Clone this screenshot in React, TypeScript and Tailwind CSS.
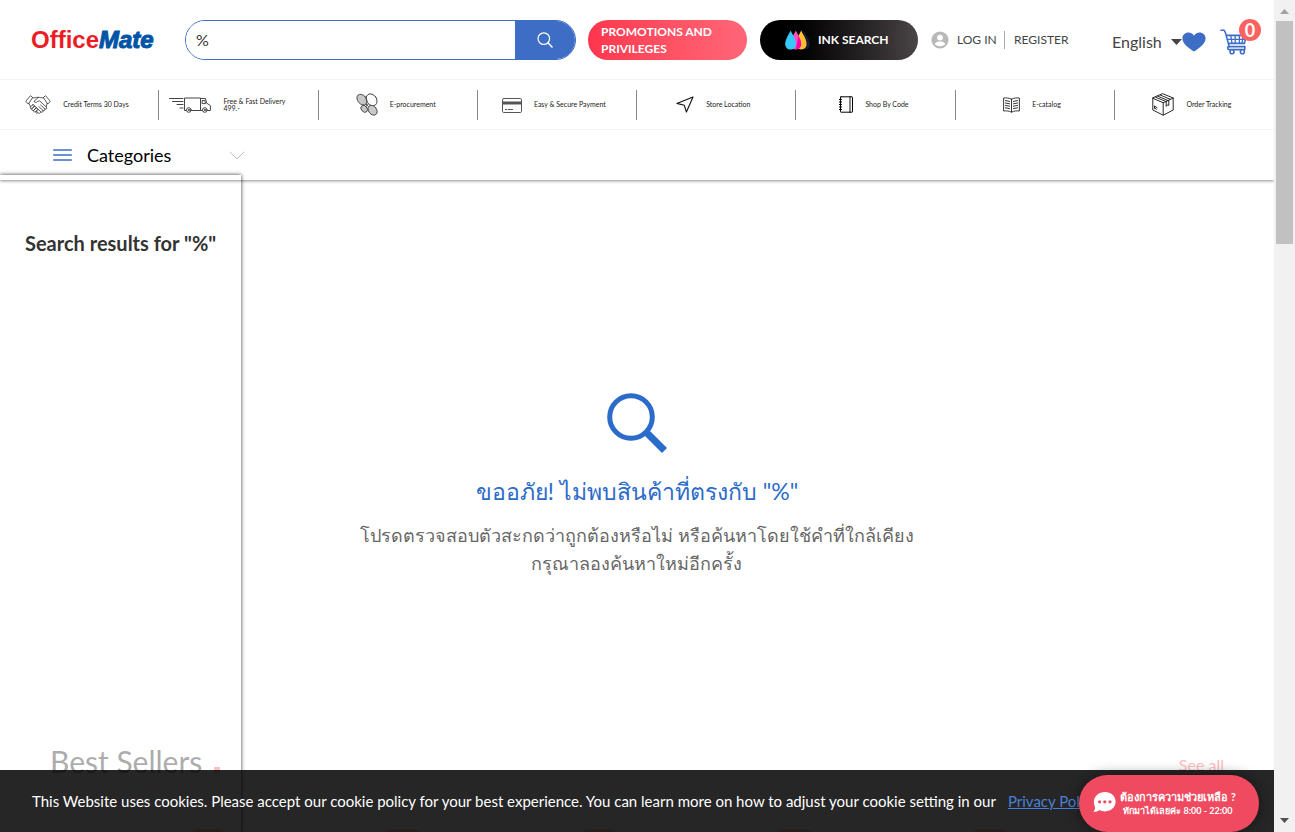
import React from "react";

const outline = { fill: "none", stroke: "currentColor", strokeLinecap: "round", strokeLinejoin: "round" } as const;

function HandshakeIcon() {
  return (
    <svg viewBox="0 0 26 20" className="h-5 w-[26px] shrink-0 text-[#333]" {...outline} strokeWidth="0.8" aria-hidden="true">
      <path d="M5.2 1 L0.8 6.2 L2.6 8.6 L3.8 8.4 L7.4 2.8 Z" />
      <path d="M20.8 1 L25.2 6.2 L23.4 8.6 L22.2 8.4 L18.6 2.8 Z" />
      <path d="M7.4 2.8 C9.5 3.2 10.8 2.2 13 2.4 C15 2.2 16.6 3.2 18.6 2.8" />
      <path d="M13.4 2.5 L9.2 6 C9 7.8 11.2 7.8 12.4 6.6 L14.6 5.8 L21.4 12.2 C22.4 13.4 21 14.8 19.8 13.8 L15.6 10" />
      <path d="M19.8 13.8 C20.6 15.2 19.2 16.4 18 15.4 L13.8 11.6 M18 15.4 C18.6 16.8 17 18 15.8 16.8 L12.4 13.6 M15.8 16.8 C15.8 18.4 14.2 18.8 13.2 17.8 L11.6 16.4" />
      <path d="M3.8 8.4 L5.6 11.8 M22.2 8.4 L21.2 11.6" />
      <path d="M7.6 9.8 L5.4 12.2 C4.8 13.6 6.2 14.4 7 13.6 L9.2 11.2 C9.4 9.8 8.4 9.2 7.6 9.8 Z" />
      <path d="M9.2 11.4 L6.8 14 C6.6 15.6 8 16 8.8 15.2 L11 12.8 C11.2 11.4 10 10.8 9.2 11.4 Z" />
      <path d="M11 13 L8.8 15.4 C8.4 17 10 17.4 10.6 16.8 L12.4 14.8 C12.6 13.2 11.6 12.6 11 13 Z" />
      <path d="M12.4 15 L10.8 16.8 C10.6 18.2 12 18.8 12.6 18" />
    </svg>
  );
}

function TruckIcon() {
  return (
    <svg viewBox="0 0 42 16" className="h-4 w-[42px] shrink-0 text-[#444]" {...outline} strokeWidth="1" aria-hidden="true">
      <path d="M17 13.5 H15.5 V1 H31.5 V13.5 H22" />
      <path d="M31.5 1.5 H36.5 L37.5 6 L41.4 8.6 V13.5 H38.5 M33 13.5 H31.5 M33.5 3.5 H35.8 L36.6 6.6 H33.5 Z" />
      <circle cx="19.8" cy="13" r="2.3" />
      <circle cx="19.8" cy="13" r="0.6" />
      <circle cx="35.8" cy="13" r="2.3" />
      <circle cx="35.8" cy="13" r="0.6" />
      <path d="M0.5 1.5 H14 M3.5 4.5 H14 M8 7.5 H14 M11 11 H14" />
    </svg>
  );
}

function ProcurementIcon() {
  return (
    <svg viewBox="0 0 22 23" className="h-[23px] w-[22px] shrink-0 text-[#444]" {...outline} strokeWidth="0.9" aria-hidden="true">
      <ellipse cx="6" cy="6.6" rx="4.3" ry="6" transform="rotate(-40 6 6.6)" fill="#c8c8c8" />
      <ellipse cx="15.6" cy="6.8" rx="5" ry="6.4" transform="rotate(-35 15.6 6.8)" />
      <ellipse cx="8.2" cy="15.8" rx="2.9" ry="3.8" transform="rotate(-40 8.2 15.8)" fill="#c8c8c8" />
      <ellipse cx="16.6" cy="17.2" rx="4" ry="5.4" transform="rotate(-38 16.6 17.2)" fill="#c8c8c8" />
      <path d="M10 11 L12 13 M10.2 13 L12.4 11" />
    </svg>
  );
}

function CardIcon() {
  return (
    <svg viewBox="0 0 20 16" className="h-4 w-5 shrink-0 text-[#555]" {...outline} strokeWidth="1" aria-hidden="true">
      <rect x="0.5" y="1.5" width="19" height="14" rx="1.2" />
      <path d="M1 6 H19" strokeWidth="3" strokeLinecap="butt" />
      <path d="M3.5 12.5 H5 M6.5 12.5 H10.5" />
    </svg>
  );
}

function LocationIcon() {
  return (
    <svg viewBox="0 0 18 17" className="h-[17px] w-[18px] shrink-0 text-[#111]" {...outline} strokeWidth="1.1" aria-hidden="true">
      <path d="M17 1 L0.9 7.4 L8.3 9.3 L10.4 16 Z" />
    </svg>
  );
}

function NotebookIcon() {
  return (
    <svg viewBox="0 0 14 17" className="h-[17px] w-[14px] shrink-0 text-black" {...outline} strokeWidth="1" aria-hidden="true">
      <path d="M11 1 V16" stroke="#888" strokeWidth="2" />
      <rect x="1.5" y="0.8" width="12" height="15.4" rx="0.5" />
      <path d="M0.4 3.5 H2.5 M0.4 6 H2.5 M0.4 8.5 H2.5 M0.4 11 H2.5 M0.4 13.5 H2.5" />
    </svg>
  );
}

function CatalogIcon() {
  return (
    <svg viewBox="0 0 17 16" className="h-4 w-[17px] shrink-0 text-[#222]" {...outline} strokeWidth="0.9" aria-hidden="true">
      <path d="M8.5 2.2 C6 0.8 3 0.7 0.6 1 V14 C3 13.7 6 13.8 8.5 15.2 C11 13.8 14 13.7 16.4 14 V1 C14 0.7 11 0.8 8.5 2.2 Z M8.5 2.2 V15" />
      <path d="M2.4 3.6 L6.6 4.4 M2.4 6 L6.6 6.8 M2.4 8.4 L6.6 9.2 M2.4 10.8 L6.6 11.6 M14.6 3.6 L10.4 4.4 M14.6 6 L10.4 6.8 M14.6 8.4 L10.4 9.2 M14.6 10.8 L10.4 11.6" />
    </svg>
  );
}

function BoxIcon() {
  return (
    <svg viewBox="0 0 22 23" className="h-[23px] w-[22px] shrink-0 text-[#111]" {...outline} strokeWidth="0.9" aria-hidden="true">
      <path d="M11 0.8 L21.2 5 V17 L11.2 22.2 L0.8 17 V5.2 Z M0.8 5.2 L11.2 9.8 L21.2 5 M11.2 9.8 V22" />
      <path d="M3.6 4.2 L14 8.6 M5.8 3.2 L16.2 7.6 M8.2 2 L18.4 6.4 M14.2 8.6 V13.4 L15.6 11.8 L16.8 12.4 V7.6" />
      <path d="M2.6 13.2 L5 14.6 M2.6 15.2 L4.4 16.2 M2.6 13.2 V15.2" />
    </svg>
  );
}

function InkDropsIcon() {
  return (
    <svg viewBox="0 0 25 20" className="h-5 w-[25px] shrink-0" aria-hidden="true">
      <path d="M18.5 0.5 C20.5 4.5 25 10 25 14 C25 17.4 22.6 19.6 19 19.6 Z" fill="#171a33" />
      <path d="M16.2 0.4 C18.4 5 21.6 9.4 21.6 14 C21.6 17.2 19.4 19.4 16.2 19.4 C13 19.4 10.8 17.2 10.8 14 C10.8 9.4 14 5 16.2 0.4 Z" fill="#fdc02f" />
      <path d="M10.8 0.4 C13 5 16.2 9.4 16.2 14 C16.2 17.2 14 19.4 10.8 19.4 C7.6 19.4 5.4 17.2 5.4 14 C5.4 9.4 8.6 5 10.8 0.4 Z" fill="#ff4fc0" />
      <path d="M13.4 6 C15 8.6 16.2 11.2 16.2 14 C16.2 17.2 14 19.4 10.8 19.4 Z" fill="#ff00a8" />
      <path d="M5.6 0.4 C7.8 5 11 9.4 11 14 C11 17.2 8.8 19.6 5.6 19.6 C2.4 19.6 0.2 17.2 0.2 14 C0.2 9.4 3.4 5 5.6 0.4 Z" fill="#35c8f8" />
    </svg>
  );
}

function CartIcon() {
  return (
    <svg viewBox="0 0 28 26" className="h-[26px] w-7 text-[#3d6dc5]" {...outline} strokeWidth="1.6" aria-hidden="true">
      <path d="M1 1.3 H4.2 L5.4 3.6 L9.2 17.6 H24.6 M6.4 6.4 H26.4 L24.4 14.4 H8.4" />
      <path d="M10.8 6.6 L12 14.2 M15.2 6.6 V14.2 M19.4 6.6 V14.2 M23.2 6.6 L22 14.2 M7.4 10.4 H25.2" strokeWidth="1.3" />
      <path d="M9.2 17.6 C7 17.6 7 20.6 9.2 20.6 H24.8 V17.6" />
      <circle cx="12" cy="22.8" r="2" fill="white" />
      <circle cx="22.4" cy="22.8" r="2" fill="white" />
    </svg>
  );
}

const services = [
  { label: "Credit Terms 30 Days", icon: <HandshakeIcon />, width: "min-w-[70px]" },
  { label: "Free & Fast Delivery\n499.-", icon: <TruckIcon />, width: "min-w-[84px]" },
  { label: "E-procurement", icon: <ProcurementIcon />, width: "min-w-[50px]" },
  { label: "Easy & Secure Payment", icon: <CardIcon />, width: "min-w-[78px]" },
  { label: "Store Location", icon: <LocationIcon />, width: "min-w-[50px]" },
  { label: "Shop By Code", icon: <NotebookIcon />, width: "min-w-[46px]" },
  { label: "E-catalog", icon: <CatalogIcon />, width: "min-w-[34px]" },
  { label: "Order Tracking", icon: <BoxIcon />, width: "min-w-[50px]" },
];

function TopBar() {
  return (
    <div className="flex h-20 items-center border-b border-[#f4f4f4] pl-[31px] pr-[13px]">
      <a href="#" aria-label="OfficeMate" className="w-[154px] shrink-0 font-['Liberation_Sans',sans-serif] text-[24px] font-bold leading-none">
        <span className="text-[#ed1c24]">Office</span>
        <span className="italic text-[#0054a6] [-webkit-text-stroke:1px_#0054a6]">Mate</span>
      </a>
      <form className="flex h-10 min-w-0 flex-1 overflow-hidden rounded-full border border-[#3d6dc5]" onSubmit={(e) => e.preventDefault()}>
        <input aria-label="Search products" defaultValue="%" className="min-w-0 flex-1 bg-white pl-[10px] text-[16px] text-[#333] outline-none" />
        <button type="submit" aria-label="Search" className="grid w-[60px] place-items-center bg-[#3d6dc5] text-white">
          <svg viewBox="0 0 16 16" className="size-4" {...outline} strokeWidth="1.2" aria-hidden="true">
            <circle cx="6.8" cy="6.6" r="5.8" />
            <path d="M11 10.8 L15 15" strokeWidth="1.6" />
          </svg>
        </button>
      </form>
      <a href="#" className="ml-3 flex h-10 w-[159px] shrink-0 items-center whitespace-nowrap rounded-full bg-linear-to-r from-[#ff354d] to-[#ff6678] pl-[13px] text-[12px] font-bold leading-[17px] text-white">
        <span>
          PROMOTIONS AND
          <br />
          PRIVILEGES
        </span>
      </a>
      <a href="#" className="ml-[13px] flex h-10 w-[158px] shrink-0 items-center gap-2 rounded-full bg-linear-to-r from-black to-[#4a4546] pl-[25px] text-[12px] font-bold text-white">
        <InkDropsIcon />
        INK SEARCH
      </a>
      <div className="ml-[13px] flex shrink-0 items-center text-[12px] text-[#444]">
        <svg viewBox="0 0 18 18" className="size-[18px]" aria-hidden="true">
          <circle cx="9" cy="9" r="8.6" fill="#b9b9b9" />
          <circle cx="9" cy="6.6" r="2.9" fill="white" />
          <path d="M3.8 13.2 C4.6 10.6 6.6 10.4 9 10.4 C11.4 10.4 13.4 10.6 14.2 13.2 C12 15.8 6 15.8 3.8 13.2 Z" fill="white" />
        </svg>
        <a href="#" className="ml-2 w-[48px] whitespace-nowrap border-r border-[#aaa] leading-[18px]">LOG IN</a>
        <a href="#" className="ml-[9px] w-[56px]">REGISTER</a>
      </div>
      <div className="ml-[42px] mt-1 flex shrink-0 items-center text-[#444]">
        <select aria-label="Language" className="w-[59px] appearance-none bg-transparent text-[16px] outline-none">
          <option>English</option>
          <option>ไทย</option>
        </select>
        <svg viewBox="0 0 11 6" className="h-[6px] w-[11px]" fill="#444" aria-hidden="true">
          <path d="M0 0 H11 L5.5 6 Z" />
        </svg>
      </div>
      <a href="#" aria-label="Wishlist" className="shrink-0">
        <svg viewBox="0 0 24 20" className="mt-1 h-5 w-6" fill="#3d6dc5" aria-hidden="true">
          <path d="M12 19.6 C9 17 0.4 12.4 0.4 6.4 C0.4 2.8 3.2 0.4 6.4 0.4 C9 0.4 11 1.8 12 3.8 C13 1.8 15 0.4 17.6 0.4 C20.8 0.4 23.6 2.8 23.6 6.4 C23.6 12.4 15 17 12 19.6 Z" />
        </svg>
      </a>
      <a href="#" aria-label="Cart, 0 items" className="relative ml-[14px] mt-1 w-[41px] shrink-0">
        <CartIcon />
        <span className="absolute -top-[10px] right-0 grid size-[22px] place-items-center rounded-full bg-[#ff6161] text-[18px] font-bold leading-none text-white">0</span>
      </a>
    </div>
  );
}

export default function App() {
  return (
    <div className="flex h-screen overflow-hidden bg-white font-[Lato,'Noto_Sans',sans-serif]">
      <div className="relative flex min-w-0 flex-1 flex-col overflow-hidden">
        <header className="shrink-0 shadow-[0_1px_3px_rgba(0,0,0,0.45)]">
          <TopBar />
          <nav aria-label="Services" className="grid h-[50px] grid-cols-8 items-center border-b border-[#f4f4f4]">
            {services.map((s) => (
              <a key={s.label} href="#" className="flex h-[30px] items-center justify-center gap-3 border-r border-[#888] text-[7px] leading-[7px] text-[#222] last:border-r-0">
                {s.icon}
                <span className={`whitespace-pre ${s.width}`}>{s.label}</span>
              </a>
            ))}
          </nav>
          <button type="button" className="flex h-[50px] w-[245px] items-center pl-[53px] text-[18px] text-black">
            <svg viewBox="0 0 19 12" className="h-3 w-[19px]" {...outline} stroke="#3d6dc5" strokeWidth="1.4" aria-hidden="true">
              <path d="M0.7 1 H18.3 M0.7 6 H18.3 M0.7 11 H18.3" />
            </svg>
            <span className="ml-[15px]">Categories</span>
            <svg viewBox="0 0 16 9" className="ml-auto h-[9px] w-4" {...outline} stroke="#bbb" strokeWidth="0.9" aria-hidden="true">
              <path d="M1 1 L8 8 L15 1" />
            </svg>
          </button>
        </header>

        <main className="grid min-h-0 flex-1 grid-cols-[241px_1fr] grid-rows-[minmax(0,1fr)]">
          <section className="relative z-10 col-start-1 row-start-1 -mt-[5px] pl-[25px] pt-[56px] shadow-[0_0_4px_rgba(0,0,0,0.8)]">
            <h1 className="whitespace-nowrap text-[20px] font-bold leading-6 text-[#333]">Search results for "%"</h1>
          </section>
          <div className="col-span-full col-start-1 row-start-1 pt-[213px]">
            <section className="flex flex-col items-center text-center">
              <svg viewBox="0 0 60 60" className="size-[60px]" fill="none" stroke="#2b6bc9" strokeWidth="5" aria-hidden="true">
                <circle cx="24" cy="24" r="21.3" />
                <path d="M38.5 38.5 L57.5 57.5" strokeWidth="7" />
              </svg>
              <h2 className="mt-5 text-[23px] leading-9 text-[#2b6bc9]">ขออภัย! ไม่พบสินค้าที่ตรงกับ "%"</h2>
              <p className="mt-3 text-[18px] leading-7 text-[#666]">
                โปรดตรวจสอบตัวสะกดว่าถูกต้องหรือไม่ หรือค้นหาโดยใช้คำที่ใกล้เคียง
                <br />
                กรุณาลองค้นหาใหม่อีกครั้ง
              </p>
            </section>
            <section className="mt-[164px] px-[50px] opacity-40">
              <div className="flex items-center justify-between">
                <h2 className="text-[30px] leading-10 text-[#333]">
                  Best Sellers <span className="ml-1 inline-block size-[6px] bg-[#ff6161]" />
                </h2>
                <a href="#" className="mt-2 text-[16px] text-[#ff6161]">See all</a>
              </div>
              <div className="mt-12 grid grid-cols-6">
                {[0, 1, 2, 3, 4, 5].map((n) => (
                  <div key={n} className="flex justify-end pr-5">
                    <span className="h-9 w-9 rounded-lg bg-[#ff6161]" />
                  </div>
                ))}
              </div>
            </section>
          </div>
        </main>

        <div role="region" aria-label="Cookie notice" className="absolute inset-x-0 bottom-0 z-20 flex h-[62px] items-center gap-3 overflow-hidden whitespace-nowrap bg-black/85 pl-8 text-[15px] text-white">
          <p>This Website uses cookies. Please accept our cookie policy for your best experience. You can learn more on how to adjust your cookie setting in our</p>
          <a href="#" className="text-[#4a80d8] underline">Privacy Policy</a>
        </div>

        <button type="button" className="absolute bottom-0 right-[15px] z-30 flex h-[57px] w-[180px] items-center gap-1 rounded-full bg-[#f04a60] pl-[14px] text-white shadow-[0_0_14px_rgba(0,0,0,0.45)]">
          <svg viewBox="0 0 23 20" className="mb-1 h-5 w-[23px] shrink-0" aria-hidden="true">
            <path d="M12 0 C18 0 22.6 4 22.6 9.6 C22.6 15.4 18 19.4 12 19.4 C10 19.4 8.2 19 6.6 18 C4.8 19.4 2.6 20 0.2 19.8 C1.8 18.4 2 16.6 2 15 C1.2 13.4 0.9 11.6 0.9 9.8 C1 4 6 0 12 0 Z" fill="white" />
            <circle cx="6.6" cy="9.8" r="1.6" fill="#f04a60" />
            <circle cx="11.8" cy="9.8" r="1.6" fill="#f04a60" />
            <circle cx="17" cy="9.8" r="1.6" fill="#f04a60" />
          </svg>
          <span className="whitespace-nowrap text-center font-bold">
            <span className="block text-[11px] leading-[15px]">ต้องการความช่วยเหลือ ?</span>
            <span className="block text-[9px] leading-[14px]">ทักมาได้เลยค่ะ 8:00 - 22:00</span>
          </span>
        </button>
      </div>

      <div aria-hidden="true" className="flex w-[21px] shrink-0 flex-col items-center bg-[#f1f1f1]">
        <svg viewBox="0 0 17 21" className="h-[21px] w-[17px] shrink-0" fill="#a3a3a3">
          <path d="M4 14 L8.5 9 L13 14 Z" />
        </svg>
        <div className="h-[223px] w-[17px] shrink-0 bg-[#c1c1c1]" />
        <svg viewBox="0 0 17 21" className="mt-auto h-[21px] w-[17px] shrink-0" fill="#505050">
          <path d="M4 7 L8.5 12 L13 7 Z" />
        </svg>
      </div>
    </div>
  );
}
